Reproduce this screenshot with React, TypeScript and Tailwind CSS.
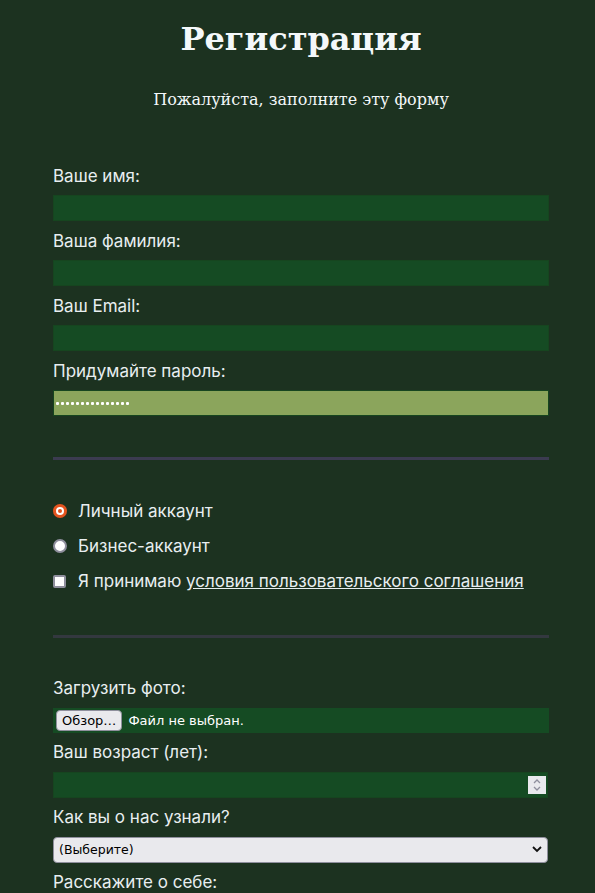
import React from 'react';

const labelCls = 'block text-[17px] leading-6 text-[#e8eef0]';
const inputCls = 'block w-full h-[26px] bg-[#154b23] border border-[#16451f] outline-none text-white px-1';

const Field: React.FC<{ label: string; children: React.ReactNode }> = ({ label, children }) => (
  <div className="mb-[8px]">
    <label className={labelCls}>{label}</label>
    <div className="mt-[7px]">{children}</div>
  </div>
);

const LowerField: React.FC<{ label: string; children: React.ReactNode }> = ({ label, children }) => (
  <div className="mb-[7px]">
    <label className={labelCls}>{label}</label>
    <div className="mt-[8px]">{children}</div>
  </div>
);

export default function App() {
  return (
    <div className="min-h-[893px] bg-[#1c3220] overflow-hidden" style={{ fontFamily: 'Inter, "Noto Sans", sans-serif' }}>
      <div className="pt-[20px] pl-[7px] text-center text-[#f4f8fa]" style={{ fontFamily: '"DejaVu Serif", serif' }}>
        <h1 className="text-[32px] leading-[38px] font-bold">Регистрация</h1>
        <p className="mt-[30px] text-[16px] leading-6">Пожалуйста, заполните эту форму</p>
      </div>

      <form className="ml-[53px] w-[496px] mt-[52px]">
        <Field label="Ваше имя:">
          <input className={inputCls} type="text" />
        </Field>
        <Field label="Ваша фамилия:">
          <input className={inputCls} type="text" />
        </Field>
        <Field label="Ваш Email:">
          <input className={inputCls} type="email" />
        </Field>
        <Field label="Придумайте пароль:">
          <div className="h-[26px] bg-[#8ba55c] border border-[#16451f] flex items-center pl-[2px] gap-[2px]">
            {Array.from({ length: 15 }).map((_, i) => (
              <span key={i} className="w-[3px] h-[3px] bg-white rounded-[1px]" />
            ))}
          </div>
        </Field>

        <hr className="mt-[41px] h-[3px] border-0 bg-[#3b3b50]" />

        <div className="mt-[39px] flex flex-col gap-[11px] text-[17px] leading-6 text-[#e8eef0]">
          <label className="flex items-center gap-[11px]">
            <span className="w-[14px] h-[14px] rounded-full bg-[#e4541f] flex items-center justify-center">
              <span className="w-[8px] h-[8px] rounded-full bg-white flex items-center justify-center">
                <span className="w-[4px] h-[4px] rounded-full bg-[#e4541f]" />
              </span>
            </span>
            Личный аккаунт
          </label>
          <label className="flex items-center gap-[11px]">
            <span className="w-[14px] h-[14px] rounded-full bg-white border-2 border-[#8f8f9d]" />
            Бизнес-аккаунт
          </label>
          <label className="flex items-center gap-[12px]">
            <span className="w-[13px] h-[13px] rounded-[2px] bg-white border-2 border-[#8f8f9d]" />
            <span>
              Я принимаю <a className="underline">условия пользовательского соглашения</a>
            </span>
          </label>
        </div>

        <hr className="mt-[42px] h-[3px] border-0 bg-[#33383f]" />

        <div className="mt-[38px]">
          <LowerField label="Загрузить фото:">
            <div className="h-[25px] bg-[#154b23] flex items-center pl-[3px] gap-[6px] text-[13px] text-white" style={{ fontFamily: '"DejaVu Sans", sans-serif' }}>
              <span className="h-[21px] px-[5px] flex items-center bg-[#e9e9ed] border border-[#8f8f9d] rounded-[4px] text-black">Обзор…</span>
              <span>Файл не выбран.</span>
            </div>
          </LowerField>
          <LowerField label="Ваш возраст (лет):">
            <div className="h-[26px] w-[495px] bg-[#154b23] border border-[#16451f] flex items-center justify-end pr-[1px]">
              <div className="w-[18px] h-[18px] bg-[#e9e9ed] flex flex-col items-center justify-center">
                <svg width="10" height="14" viewBox="0 0 10 14" fill="none" stroke="#8f8f9d" strokeWidth="1.3">
                  <path d="M2 5 L5 2 L8 5" />
                  <path d="M2 9 L5 12 L8 9" />
                </svg>
              </div>
            </div>
          </LowerField>
          <LowerField label="Как вы о нас узнали?">
            <div className="relative w-[495px]">
              <select className="appearance-none block w-full h-[26px] bg-[#e9e9ed] border border-[#8f8f9d] rounded-[4px] pl-[5px] text-[12.5px] text-black outline-none" style={{ fontFamily: '"DejaVu Sans", sans-serif' }}>
                <option>(Выберите)</option>
              </select>
              <svg className="absolute right-[6px] top-[9px] pointer-events-none" width="10" height="7" viewBox="0 0 10 7" fill="none" stroke="#111" strokeWidth="1.8">
                <path d="M1 1 L5 5 L9 1" />
              </svg>
            </div>
          </LowerField>
          <label className={labelCls}>Расскажите о себе:</label>
        </div>
      </form>
    </div>
  );
}
